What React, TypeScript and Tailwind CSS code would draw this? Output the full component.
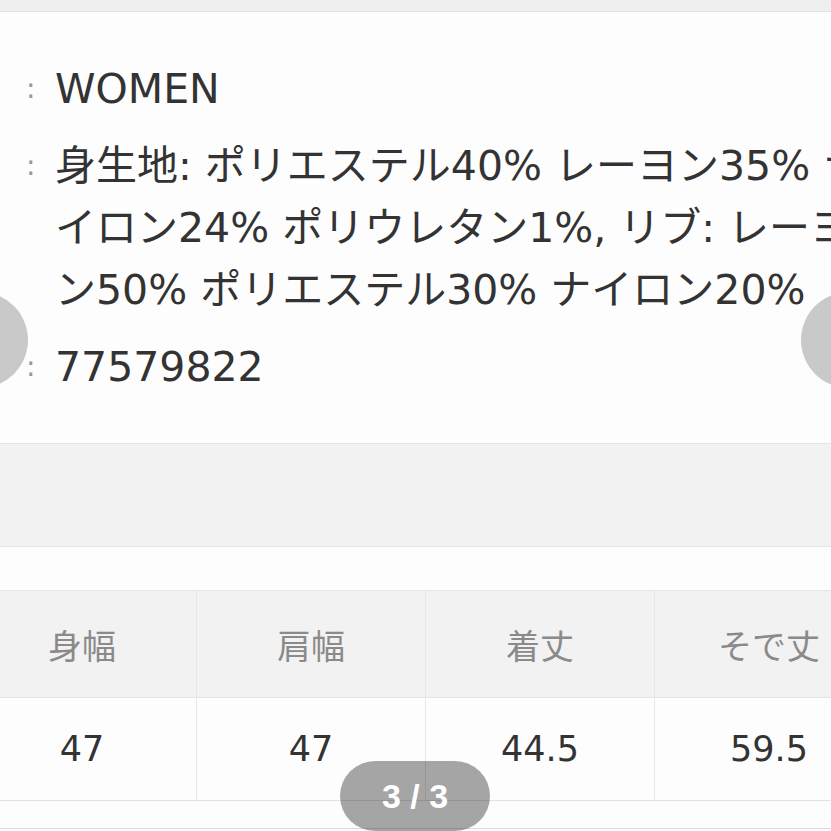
import React from "react";

const rows = [
  { value: ["WOMEN"] },
  {
    value: [
      "身生地: ポリエステル40% レーヨン35% ナ",
      "イロン24% ポリウレタン1%, リブ: レーヨ",
      "ン50% ポリエステル30% ナイロン20%",
    ],
  },
  { value: ["77579822"] },
];

const sizes = [
  { label: "身幅", value: "47" },
  { label: "肩幅", value: "47" },
  { label: "着丈", value: "44.5" },
  { label: "そで丈", value: "59.5" },
];

const bodyFont = "font-['DejaVu_Sans','Noto_Sans_CJK_JP',sans-serif]";

const App = () => {
  return (
    <div className={`relative w-[831px] h-[831px] overflow-hidden bg-[#fdfdfd] text-[#333] ${bodyFont}`}>
      {/* top strip */}
      <div className="h-[12px] bg-[#efefef] border-b border-[#e2e2e2]"></div>

      {/* detail rows */}
      <div className="pt-[46px] pb-[45px] flex flex-col gap-[15px]">
        {rows.map((row, i) => (
          <div key={i} className="flex">
            <span className="w-[55px] shrink-0 pl-[26px] text-[28px] leading-[62px] text-[#999]">:</span>
            <p className="whitespace-nowrap text-[41px] leading-[62px]">
              {row.value.map((line, j) => (
                <span key={j} className="block">
                  {line}
                </span>
              ))}
            </p>
          </div>
        ))}
      </div>

      {/* grey band */}
      <div className="h-[104px] bg-[#f2f2f2] border-t border-b border-[#e4e4e4]"></div>
      <div className="h-[44px] bg-[#fdfdfd] border-b border-[#e6e6e6]"></div>

      {/* size table */}
      <div className="-ml-[32px] w-[916px] grid grid-cols-4 border-b border-[#e2e2e2]">
        {sizes.map((s, i) => (
          <div key={i} className="flex flex-col border-r border-[#e6e6e6]">
            <div className="h-[107px] flex items-center justify-center bg-[#f2f2f2] border-b border-[#e4e4e4] text-[34px] text-[#8a8a8a] font-['Noto_Sans_CJK_JP',sans-serif]">
              {s.label}
            </div>
            <div className="h-[102px] flex items-center justify-center text-[35px] text-[#333]">
              {s.value}
            </div>
          </div>
        ))}
      </div>
      <div className="h-[28px] border-b border-[#dcdcdc]"></div>

      {/* carousel arrows */}
      <div className="absolute left-[-68px] top-[292px] w-[96px] h-[96px] rounded-full bg-[#c9c9c9]"></div>
      <div className="absolute left-[801px] top-[292px] w-[96px] h-[96px] rounded-full bg-[#c9c9c9]"></div>

      {/* page indicator */}
      <div className="absolute left-[340px] top-[761px] w-[150px] h-[70px] rounded-full bg-black/35 flex items-center justify-center">
        <span className="text-white font-bold text-[34px] font-['Liberation_Sans',sans-serif]">3 / 3</span>
      </div>
    </div>
  );
};

export default App;
